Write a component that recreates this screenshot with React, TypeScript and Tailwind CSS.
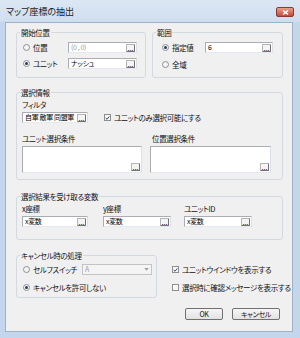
import type { ReactNode } from 'react'

const font = "font-['Noto_Sans_CJK_JP','Noto_Sans',sans-serif] [font-feature-settings:'palt']"

function Dots() {
  return (
    <span className="flex h-[8px] w-[9px] shrink-0 items-end justify-center rounded-[1px] border border-[#b5b5b5] border-b-[#707070] border-r-[#707070] bg-[#f4f4f4] pb-[1px] text-[7px] leading-[4px] tracking-normal text-black">
      ...
    </span>
  )
}

function Field({ w, value, dim }: { w: number; value: string; dim?: boolean }) {
  return (
    <div
      style={{ width: w }}
      className={`flex h-[11px] shrink-0 items-center gap-[1px] border border-[#abadb3] border-b-[#e3e9ef] border-r-[#dbdfe6] bg-white pl-[2px] pr-[1px] text-[7px] ${dim ? 'text-[#9a9a9a]' : 'text-black'}`}
    >
      <span className="min-w-0 flex-1 overflow-hidden leading-[9px]">{value}</span>
      <Dots />
    </div>
  )
}

function Radio({ on }: { on?: boolean }) {
  return (
    <span className="flex h-[7px] w-[7px] shrink-0 items-center justify-center rounded-full border border-[#8e8f8f] bg-[#f4f4f4]">
      {on && <span className="h-[3px] w-[3px] rounded-full bg-[#1d3f63]" />}
    </span>
  )
}

function Check({ on }: { on?: boolean }) {
  return (
    <span className="flex h-[7px] w-[7px] shrink-0 items-center justify-center border border-[#8e8f8f] bg-[#f7f7f7]">
      {on && (
        <svg viewBox="0 0 7 7" className="h-[6px] w-[6px]">
          <path d="M1 3.5 L2.8 5.3 L6 1.3" stroke="#1e3f66" strokeWidth="1.3" fill="none" />
        </svg>
      )}
    </span>
  )
}

function Group({ title, className, children }: { title: string; className: string; children: ReactNode }) {
  return (
    <div className={`relative shrink-0 rounded-[3px] border border-[#d3d9df] ${className}`}>
      <span className="absolute left-[3px] top-[-6px] bg-[#f0f0f0] px-[1px] leading-[11px]">{title}</span>
      {children}
    </div>
  )
}

function Area({ w }: { w: number }) {
  return (
    <div
      style={{ width: w }}
      className="relative h-[27px] border border-[#abadb3] border-b-[#e3e9ef] border-r-[#dbdfe6] bg-white"
    >
      <span className="absolute bottom-[1px] right-[1px]">
        <Dots />
      </span>
    </div>
  )
}

export default function App() {
  return (
    <div className={`flex h-[338px] w-[300px] flex-col bg-[#c3d6ec] text-black ${font}`}>
      <div className="flex h-[22px] items-center justify-between bg-gradient-to-b from-[#dce7f3] to-[#cfdeef] pl-[6px] pr-[6px]">
        <span className="text-[9px] leading-none text-[#1b1b1b]">マップ座標の抽出</span>
        <span className="mt-[2px] flex h-[10px] w-[18px] items-center justify-center rounded-[2px] border border-[#8b3a32] bg-gradient-to-b from-[#e6a08e] to-[#c4483a]">
          <svg viewBox="0 0 8 6" className="h-[5px] w-[7px]">
            <path d="M1 0.5 L7 5.5 M7 0.5 L1 5.5" stroke="white" strokeWidth="1.6" />
          </svg>
        </span>
      </div>

      <div className="mb-[6px] ml-[5px] mr-[7px] flex-1 whitespace-nowrap border border-[#9db2c9] bg-[#f0f0f0] pl-[10px] pt-[9px] text-[7.5px] leading-[11px] tracking-[-0.35px] text-[#111]">
        <div className="flex gap-[6px]">
          <Group title="開始位置" className="h-[46px] w-[130px] pl-[6px] pt-[9px]">
            <div className="flex flex-col gap-[5px]">
              <div className="flex items-center">
                <div className="flex w-[45px] items-center gap-[3px]">
                  <Radio />
                  <span>位置</span>
                </div>
                <Field w={69} value="(0 , 0)" dim />
              </div>
              <div className="flex items-center">
                <div className="flex w-[45px] items-center gap-[3px]">
                  <Radio on />
                  <span>ユニット</span>
                </div>
                <Field w={69} value="ナッシュ" />
              </div>
            </div>
          </Group>
          <Group title="範囲" className="h-[46px] w-[131px] pl-[9px] pt-[9px]">
            <div className="flex flex-col gap-[6px]">
              <div className="flex items-center">
                <div className="flex w-[43px] items-center gap-[3px]">
                  <Radio on />
                  <span>指定値</span>
                </div>
                <Field w={68} value="6" />
              </div>
              <div className="flex items-center gap-[3px]">
                <Radio />
                <span>全域</span>
              </div>
            </div>
          </Group>
        </div>

        <Group title="選択情報" className="mt-[14px] h-[88px] w-[267px] pl-[5px] pt-[6px]">
          <div>フィルタ</div>
          <div className="mt-[2px] flex items-center">
            <Field w={66} value="自軍 敵軍 同盟軍" />
            <span className="ml-[16px] flex items-center gap-[3px]">
              <Check on />
              <span>ユニットのみ選択可能にする</span>
            </span>
          </div>
          <div className="mt-[10px] flex gap-[8px]">
            <div className="flex flex-col gap-[2px]">
              <span>ユニット選択条件</span>
              <Area w={120} />
            </div>
            <div className="flex flex-col gap-[2px]">
              <span className="pl-[2px]">位置選択条件</span>
              <Area w={121} />
            </div>
          </div>
        </Group>

        <Group title="選択結果を受け取る変数" className="mt-[16px] flex h-[44px] w-[267px] pl-[5px] pt-[6px]">
          {[
            ['x座標', 66],
            ['y座標', 68],
            ['ユニットID', 68],
          ].map(([label, w]) => (
            <div key={label} className="flex w-[81px] flex-col gap-[2px]">
              <span>{label}</span>
              <Field w={w as number} value="x変数" />
            </div>
          ))}
        </Group>

        <div className="mt-[15px] flex">
          <Group title="キャンセル時の処理" className="h-[43px] w-[141px] pl-[6px] pt-[8px]">
            <div className="flex items-center">
              <div className="flex w-[59px] items-center gap-[3px]">
                <Radio />
                <span>セルフスイッチ</span>
              </div>
              <div className="flex h-[11px] w-[70px] items-center justify-between border border-[#c3c3c3] bg-[#f4f4f4] pl-[2px] text-[7px] text-[#a0a0a0]">
                <span className="leading-[9px]">A</span>
                <svg viewBox="0 0 6 4" className="mr-[2px] h-[3px] w-[5px]">
                  <path d="M0 0 H6 L3 3.5 Z" fill="#a0a0a0" />
                </svg>
              </div>
            </div>
            <div className="mt-[7px] flex items-center gap-[3px]">
              <Radio on />
              <span>キャンセルを許可しない</span>
            </div>
          </Group>
          <div className="ml-[15px] flex flex-col gap-[7px] pt-[9px]">
            <span className="flex items-center gap-[3px]">
              <Check on />
              <span>ユニットウインドウを表示する</span>
            </span>
            <span className="flex items-center gap-[3px]">
              <Check />
              <span>選択時に確認メッセージを表示する</span>
            </span>
          </div>
        </div>

        <div className="mr-[12px] mt-[10px] flex justify-end gap-[9px]">
          <button className="h-[12px] w-[38px] rounded-[2px] border border-[#707070] bg-gradient-to-b from-[#f6f6f6] to-[#e2e2e2] text-[7px] leading-none">
            OK
          </button>
          <button className="h-[12px] w-[48px] rounded-[2px] border border-[#707070] bg-gradient-to-b from-[#f6f6f6] to-[#e2e2e2] text-[7px] leading-none">
            キャンセル
          </button>
        </div>
      </div>
    </div>
  )
}
